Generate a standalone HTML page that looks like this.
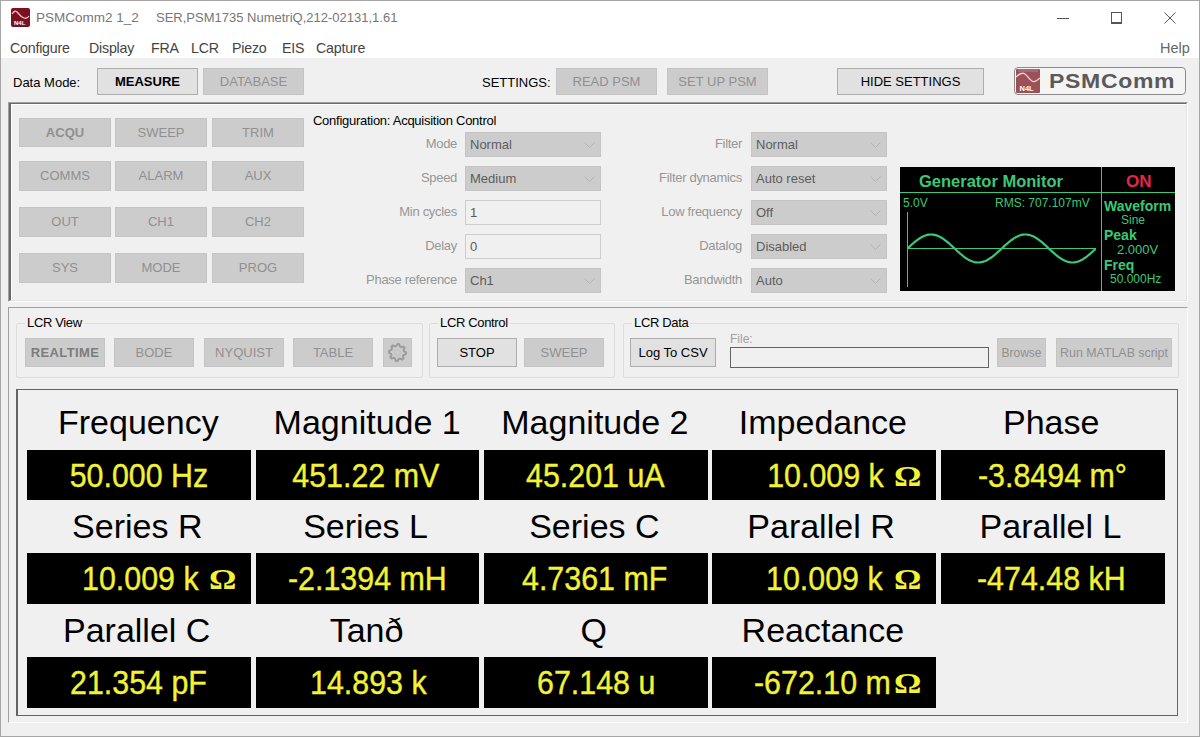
<!DOCTYPE html>
<html><head><meta charset="utf-8">
<style>
*{margin:0;padding:0;box-sizing:border-box}
html,body{width:1200px;height:737px;overflow:hidden;background:#f0f0f0;font-family:"Liberation Sans",sans-serif}
.a{position:absolute}
.t{position:absolute;white-space:nowrap}
.btn{position:absolute;background:#e1e1e1;border:1px solid #adadad;color:#000;font-size:13px;text-align:center;white-space:nowrap}
.dis{position:absolute;background:#cccccc;border:1px solid #c4c4c4;color:#909090;font-size:13px;text-align:center;white-space:nowrap}
.combo{position:absolute;background:#cccccc;border:1px solid #c4c4c4;color:#5c5c5c;font-size:13px;white-space:nowrap;padding-left:4px}
.combo svg{position:absolute;right:5px;top:9px}
.tb{position:absolute;background:#f0f0f0;border:1px solid #cdcdcd;color:#5a5a5a;font-size:13px;padding-left:4px}
.lbl{position:absolute;color:#969696;font-size:13px;text-align:right;white-space:nowrap;letter-spacing:-0.3px}
.grp{position:absolute;border:1px solid #dcdcdc;border-radius:2px}
.glt{position:absolute;background:#f0f0f0;font-size:13px;color:#000;padding:0 2px;white-space:nowrap;letter-spacing:-0.35px}
.rl{position:absolute;font-size:34px;color:#000;white-space:nowrap;line-height:40px;height:40px}
.rb{position:absolute;width:224px;height:50px;background:#000}
.rv{position:absolute;color:#f2f236;-webkit-text-stroke:0.35px #f2f236;font-size:30.4px;white-space:nowrap;line-height:34px;height:34px;transform-origin:0 50%}
</style></head><body>
<div class="a" style="left:0;top:0;width:1200px;height:737px;border:1px solid #a6a6a6;background:#f0f0f0"></div>
<div class="a" style="left:1px;top:1px;width:1198px;height:57px;background:#fff"></div>
<svg class="a" style="left:11px;top:8px" width="19" height="19" viewBox="0 0 19 19">
<rect x="0" y="0" width="19" height="19" rx="2" fill="#7a1020"/>
<path d="M1 6 Q4 1 7 5 T13 10 Q16 11 18 8" stroke="#f0c0c0" stroke-width="1.3" fill="none"/>
<text x="3" y="17" font-size="6" font-weight="bold" fill="#fff" font-family="Liberation Sans">N4L</text>
</svg>
<div class="t" style="left:36px;top:10px;font-size:13.5px;color:#777">PSMComm2 1_2</div>
<div class="t" style="left:156px;top:10px;font-size:13px;color:#777">SER,PSM1735 NumetriQ,212-02131,1.61</div>
<div class="a" style="left:1057px;top:18px;width:12px;height:1px;background:#555"></div>
<div class="a" style="left:1111px;top:12px;width:11px;height:12px;border:1px solid #555;border-bottom-width:2px"></div>
<svg class="a" style="left:1164px;top:12px" width="12" height="12"><path d="M0.5 0.5 L11.5 11.5 M11.5 0.5 L0.5 11.5" stroke="#555" stroke-width="1"/></svg>
<div class="t" style="left:10px;top:39.5px;font-size:14.2px;color:#444;letter-spacing:-0.2px">Configure</div>
<div class="t" style="left:89px;top:39.5px;font-size:14.2px;color:#444;letter-spacing:-0.2px">Display</div>
<div class="t" style="left:151px;top:39.5px;font-size:14.2px;color:#444;letter-spacing:-0.2px">FRA</div>
<div class="t" style="left:191px;top:39.5px;font-size:14.2px;color:#444;letter-spacing:-0.2px">LCR</div>
<div class="t" style="left:232px;top:39.5px;font-size:14.2px;color:#444;letter-spacing:-0.2px">Piezo</div>
<div class="t" style="left:282px;top:39.5px;font-size:14.2px;color:#444;letter-spacing:-0.2px">EIS</div>
<div class="t" style="left:316px;top:39.5px;font-size:14.2px;color:#444;letter-spacing:-0.2px">Capture</div>
<div class="t" style="left:1160px;top:39.5px;font-size:14.5px;color:#666">Help</div>
<div class="t" style="left:13px;top:75px;font-size:13px;color:#000">Data Mode:</div>
<div class="btn" style="left:97px;top:68px;width:101px;height:27px;line-height:25px;font-weight:bold">MEASURE</div>
<div class="dis" style="left:203px;top:68px;width:101px;height:27px;line-height:25px">DATABASE</div>
<div class="t" style="left:482px;top:75px;font-size:13px;color:#000">SETTINGS:</div>
<div class="dis" style="left:556px;top:68px;width:101px;height:27px;line-height:25px">READ PSM</div>
<div class="dis" style="left:667px;top:68px;width:101px;height:27px;line-height:25px">SET UP PSM</div>
<div class="btn" style="left:837px;top:68px;width:147px;height:27px;line-height:25px">HIDE SETTINGS</div>
<div class="a" style="left:1014px;top:67px;width:172px;height:28px;border:1px solid #8a8a8a;border-radius:4px;background:#f4f4f4"></div>
<svg class="a" style="left:1016px;top:69px" width="24" height="24" viewBox="0 0 24 24">
<rect x="0" y="0" width="24" height="24" rx="1" fill="#9c5058"/>
<rect x="2" y="0" width="20" height="3" fill="#a86870"/>
<path d="M0 8 C2.5 5.5 5 4 7.5 4.3 C11 4.8 14 12.6 17.6 12.6 C20 12.6 22 10.5 24 9" stroke="#f4d4d4" stroke-width="1.3" fill="none"/>
<text x="3.5" y="21.5" font-size="7.5" font-weight="bold" fill="#fff" font-family="Liberation Sans">N4L</text>
</svg>
<div class="t" style="left:1049px;top:69.5px;font-size:20px;font-weight:bold;color:#5a5a5a;letter-spacing:0.6px;transform:scaleX(1.15);transform-origin:0 0">PSMComm</div>
<div class="a" style="left:8px;top:102px;width:1180px;height:200px;border-top:1px solid #a0a0a0;border-left:1px solid #a0a0a0;border-right:1px solid #fff;border-bottom:1px solid #fff"></div>
<div class="a" style="left:9px;top:103px;width:1178px;height:198px;border-top:1px solid #696969;border-left:2px solid #696969;border-right:1px solid #e3e3e3;border-bottom:1px solid #e3e3e3;box-shadow:inset 1px 1px 0 #fff"></div>
<div class="dis" style="left:19px;top:118px;width:92px;height:29px;line-height:27px;font-weight:bold;">ACQU</div>
<div class="dis" style="left:115px;top:118px;width:92px;height:29px;line-height:27px;">SWEEP</div>
<div class="dis" style="left:212px;top:118px;width:92px;height:29px;line-height:27px;">TRIM</div>
<div class="dis" style="left:19px;top:161px;width:92px;height:30px;line-height:28px;">COMMS</div>
<div class="dis" style="left:115px;top:161px;width:92px;height:30px;line-height:28px;">ALARM</div>
<div class="dis" style="left:212px;top:161px;width:92px;height:30px;line-height:28px;">AUX</div>
<div class="dis" style="left:19px;top:207px;width:92px;height:30px;line-height:28px;">OUT</div>
<div class="dis" style="left:115px;top:207px;width:92px;height:30px;line-height:28px;">CH1</div>
<div class="dis" style="left:212px;top:207px;width:92px;height:30px;line-height:28px;">CH2</div>
<div class="dis" style="left:19px;top:253px;width:92px;height:30px;line-height:28px;">SYS</div>
<div class="dis" style="left:115px;top:253px;width:92px;height:30px;line-height:28px;">MODE</div>
<div class="dis" style="left:212px;top:253px;width:92px;height:30px;line-height:28px;">PROG</div>
<div class="t" style="left:313px;top:113px;font-size:13px;color:#000;letter-spacing:-0.27px">Configuration: Acquisition Control</div>
<div class="lbl" style="left:300px;top:136px;width:157px">Mode</div>
<div class="combo" style="left:465px;top:132px;width:136px;height:25px;line-height:23px">Normal<svg width="11" height="6"><path d="M0.5 0.5 L5.5 5.5 L10.5 0.5" stroke="#b4b4b4" fill="none"/></svg></div>
<div class="lbl" style="left:300px;top:170px;width:157px">Speed</div>
<div class="combo" style="left:465px;top:166px;width:136px;height:25px;line-height:23px">Medium<svg width="11" height="6"><path d="M0.5 0.5 L5.5 5.5 L10.5 0.5" stroke="#b4b4b4" fill="none"/></svg></div>
<div class="lbl" style="left:300px;top:204px;width:157px">Min cycles</div>
<div class="tb" style="left:465px;top:200px;width:136px;height:25px;line-height:23px">1</div>
<div class="lbl" style="left:300px;top:238px;width:157px">Delay</div>
<div class="tb" style="left:465px;top:234px;width:136px;height:25px;line-height:23px">0</div>
<div class="lbl" style="left:300px;top:272px;width:157px">Phase reference</div>
<div class="combo" style="left:465px;top:268px;width:136px;height:25px;line-height:23px">Ch1<svg width="11" height="6"><path d="M0.5 0.5 L5.5 5.5 L10.5 0.5" stroke="#b4b4b4" fill="none"/></svg></div>
<div class="lbl" style="left:600px;top:136px;width:142px">Filter</div>
<div class="combo" style="left:751px;top:132px;width:136px;height:25px;line-height:23px">Normal<svg width="11" height="6"><path d="M0.5 0.5 L5.5 5.5 L10.5 0.5" stroke="#b4b4b4" fill="none"/></svg></div>
<div class="lbl" style="left:600px;top:170px;width:142px">Filter dynamics</div>
<div class="combo" style="left:751px;top:166px;width:136px;height:25px;line-height:23px">Auto reset<svg width="11" height="6"><path d="M0.5 0.5 L5.5 5.5 L10.5 0.5" stroke="#b4b4b4" fill="none"/></svg></div>
<div class="lbl" style="left:600px;top:204px;width:142px">Low frequency</div>
<div class="combo" style="left:751px;top:200px;width:136px;height:25px;line-height:23px">Off<svg width="11" height="6"><path d="M0.5 0.5 L5.5 5.5 L10.5 0.5" stroke="#b4b4b4" fill="none"/></svg></div>
<div class="lbl" style="left:600px;top:238px;width:142px">Datalog</div>
<div class="combo" style="left:751px;top:234px;width:136px;height:25px;line-height:23px">Disabled<svg width="11" height="6"><path d="M0.5 0.5 L5.5 5.5 L10.5 0.5" stroke="#b4b4b4" fill="none"/></svg></div>
<div class="lbl" style="left:600px;top:272px;width:142px">Bandwidth</div>
<div class="combo" style="left:751px;top:268px;width:136px;height:25px;line-height:23px">Auto<svg width="11" height="6"><path d="M0.5 0.5 L5.5 5.5 L10.5 0.5" stroke="#b4b4b4" fill="none"/></svg></div>
<svg class="a" style="left:900px;top:167px" width="275" height="124" viewBox="0 0 275 124">
<rect x="0" y="0" width="275" height="124" fill="#000"/>
<line x1="201.5" y1="0" x2="201.5" y2="124" stroke="#3cc878" stroke-width="1"/>
<line x1="0" y1="25.5" x2="275" y2="25.5" stroke="#3cc878" stroke-width="1"/>
<line x1="7.5" y1="45" x2="7.5" y2="120" stroke="#3cc878" stroke-width="1"/>
<line x1="7" y1="81.5" x2="196" y2="81.5" stroke="#3cc878" stroke-width="1"/>
<polyline points="7.5,81.5 8.5,80.6 9.5,79.6 10.5,78.7 11.5,77.8 12.5,76.9 13.5,76.0 14.5,75.2 15.5,74.4 16.5,73.6 17.5,72.8 18.5,72.1 19.5,71.5 20.5,70.8 21.5,70.2 22.5,69.7 23.5,69.2 24.5,68.8 25.5,68.5 26.5,68.1 27.5,67.9 28.5,67.7 29.5,67.6 30.5,67.5 31.5,67.5 32.5,67.6 33.5,67.7 34.5,67.9 35.5,68.1 36.5,68.4 37.5,68.8 38.5,69.2 39.5,69.7 40.5,70.2 41.5,70.8 42.5,71.4 43.5,72.0 44.5,72.8 45.5,73.5 46.5,74.3 47.5,75.1 48.5,75.9 49.5,76.8 50.5,77.7 51.5,78.6 52.5,79.5 53.5,80.5 54.5,81.4 55.5,82.3 56.5,83.2 57.5,84.2 58.5,85.1 59.5,86.0 60.5,86.8 61.5,87.7 62.5,88.5 63.5,89.3 64.5,90.1 65.5,90.8 66.5,91.5 67.5,92.1 68.5,92.7 69.5,93.2 70.5,93.7 71.5,94.1 72.5,94.5 73.5,94.8 74.5,95.1 75.5,95.3 76.5,95.4 77.5,95.5 78.5,95.5 79.5,95.4 80.5,95.3 81.5,95.2 82.5,94.9 83.5,94.6 84.5,94.3 85.5,93.9 86.5,93.4 87.5,92.9 88.5,92.3 89.5,91.7 90.5,91.0 91.5,90.3 92.5,89.6 93.5,88.8 94.5,88.0 95.5,87.2 96.5,86.3 97.5,85.4 98.5,84.5 99.5,83.6 100.5,82.7 101.5,81.7 102.5,80.8 103.5,79.9 104.5,78.9 105.5,78.0 106.5,77.1 107.5,76.3 108.5,75.4 109.5,74.6 110.5,73.8 111.5,73.0 112.5,72.3 113.5,71.6 114.5,71.0 115.5,70.4 116.5,69.8 117.5,69.4 118.5,68.9 119.5,68.5 120.5,68.2 121.5,67.9 122.5,67.7 123.5,67.6 124.5,67.5 125.5,67.5 126.5,67.5 127.5,67.6 128.5,67.8 129.5,68.0 130.5,68.3 131.5,68.7 132.5,69.1 133.5,69.5 134.5,70.0 135.5,70.6 136.5,71.2 137.5,71.9 138.5,72.6 139.5,73.3 140.5,74.1 141.5,74.9 142.5,75.7 143.5,76.6 144.5,77.5 145.5,78.4 146.5,79.3 147.5,80.2 148.5,81.2 149.5,82.1 150.5,83.0 151.5,83.9 152.5,84.9 153.5,85.7 154.5,86.6 155.5,87.5 156.5,88.3 157.5,89.1 158.5,89.9 159.5,90.6 160.5,91.3 161.5,91.9 162.5,92.5 163.5,93.1 164.5,93.6 165.5,94.0 166.5,94.4 167.5,94.7 168.5,95.0 169.5,95.2 170.5,95.4 171.5,95.5 172.5,95.5 173.5,95.5 174.5,95.4 175.5,95.2 176.5,95.0 177.5,94.7 178.5,94.4 179.5,94.0 180.5,93.5 181.5,93.0 182.5,92.5 183.5,91.9 184.5,91.2 185.5,90.5 186.5,89.8 187.5,89.0 188.5,88.2 189.5,87.4 190.5,86.5 191.5,85.6 192.5,84.7 193.5,83.8 194.5,82.9 195.5,82.0" stroke="#3cc878" stroke-width="2.2" fill="none"/>
</svg>
<div class="t" style="left:919px;top:172px;font-size:16.5px;font-weight:bold;color:#3cc878">Generator Monitor</div>
<div class="t" style="left:1126px;top:172px;font-size:17px;font-weight:bold;color:#e0284a">ON</div>
<div class="t" style="left:903px;top:196px;font-size:12px;color:#3cc878">5.0V</div>
<div class="t" style="left:995px;top:196px;font-size:12px;color:#3cc878">RMS: 707.107mV</div>
<div class="t" style="left:1104px;top:197.5px;font-size:14px;font-weight:bold;color:#3cc878">Waveform</div>
<div class="t" style="left:1121px;top:213px;font-size:12px;color:#3cc878">Sine</div>
<div class="t" style="left:1104px;top:226.5px;font-size:14px;font-weight:bold;color:#3cc878">Peak</div>
<div class="t" style="left:1117px;top:242px;font-size:13px;color:#3cc878">2.000V</div>
<div class="t" style="left:1104px;top:257px;font-size:14px;font-weight:bold;color:#3cc878">Freq</div>
<div class="t" style="left:1110px;top:272px;font-size:12px;color:#3cc878">50.000Hz</div>
<div class="a" style="left:8px;top:307px;width:1180px;height:416px;border-top:1px solid #a0a0a0;border-left:1px solid #a0a0a0;border-right:1px solid #fff;border-bottom:1px solid #fff"></div>
<div class="grp" style="left:16px;top:323px;width:407px;height:55px"></div>
<div class="glt" style="left:25px;top:315px">LCR View</div>
<div class="grp" style="left:429px;top:323px;width:186px;height:55px"></div>
<div class="glt" style="left:438px;top:315px">LCR Control</div>
<div class="grp" style="left:623px;top:323px;width:556px;height:55px"></div>
<div class="glt" style="left:632px;top:315px">LCR Data</div>
<div class="dis" style="left:25px;top:338px;width:80px;height:29px;line-height:27px;font-weight:bold;color:#7c7c7c;letter-spacing:0.4px;">REALTIME</div>
<div class="dis" style="left:114px;top:338px;width:80px;height:29px;line-height:27px;">BODE</div>
<div class="dis" style="left:204px;top:338px;width:80px;height:29px;line-height:27px;">NYQUIST</div>
<div class="dis" style="left:293px;top:338px;width:80px;height:29px;line-height:27px;">TABLE</div>
<div class="dis" style="left:383px;top:338px;width:29px;height:29px"></div>
<svg class="a" style="left:383px;top:338px" width="29" height="29"><polygon points="23.0,14.5 22.8,16.2 20.5,17.0 19.9,18.1 20.5,20.5 19.2,21.6 17.0,20.5 15.8,20.9 14.5,23.0 12.8,22.8 12.0,20.5 10.9,19.9 8.5,20.5 7.4,19.2 8.5,17.0 8.1,15.8 6.0,14.5 6.2,12.8 8.5,12.0 9.1,10.9 8.5,8.5 9.8,7.4 12.0,8.5 13.2,8.1 14.5,6.0 16.2,6.2 17.0,8.5 18.1,9.1 20.5,8.5 21.6,9.8 20.5,12.0 20.9,13.2" fill="none" stroke="#9c9c9c" stroke-width="2"/><circle cx="14.5" cy="14.5" r="3" fill="none" stroke="#bdbdbd" stroke-width="1"/></svg>
<div class="btn" style="left:437px;top:338px;width:80px;height:29px;line-height:27px">STOP</div>
<div class="dis" style="left:524px;top:338px;width:80px;height:29px;line-height:27px">SWEEP</div>
<div class="btn" style="left:630px;top:338px;width:86px;height:29px;line-height:27px">Log To CSV</div>
<div class="t" style="left:730px;top:332px;font-size:12px;color:#a0a0a0">File:</div>
<div class="a" style="left:730px;top:347px;width:259px;height:21px;border:1px solid #646464;background:#f0f0f0"></div>
<div class="dis" style="left:997px;top:338px;width:49px;height:29px;line-height:29px;font-size:12px">Browse</div>
<div class="dis" style="left:1056px;top:338px;width:116px;height:29px;line-height:29px;font-size:12.4px">Run MATLAB script</div>
<div class="a" style="left:16px;top:389px;width:1162px;height:327px;border:1px solid #646464;border-left-width:2px"></div>
<div class="rl" style="left:58.0px;top:402.0px">Frequency</div>
<div class="rl" style="left:273.6px;top:402.0px">Magnitude 1</div>
<div class="rl" style="left:501.3px;top:402.0px">Magnitude 2</div>
<div class="rl" style="left:738.8px;top:402.0px">Impedance</div>
<div class="rl" style="left:1003.0px;top:402.0px">Phase</div>
<div class="rl" style="left:72.1px;top:505.5px">Series R</div>
<div class="rl" style="left:303.2px;top:505.5px">Series L</div>
<div class="rl" style="left:529.2px;top:505.5px">Series C</div>
<div class="rl" style="left:747.3px;top:505.5px">Parallel R</div>
<div class="rl" style="left:979.6px;top:505.5px">Parallel L</div>
<div class="rl" style="left:63.0px;top:610.0px">Parallel C</div>
<div class="rl" style="left:329.7px;top:610.0px">Tan&eth;</div>
<div class="rl" style="left:580.5px;top:610.0px">Q</div>
<div class="rl" style="left:741.6px;top:610.0px">Reactance</div>
<div class="rb" style="left:27px;top:450px;width:224px;height:50px"></div>
<div class="rb" style="left:256px;top:450px;width:223px;height:50px"></div>
<div class="rb" style="left:484px;top:450px;width:224px;height:50px"></div>
<div class="rb" style="left:712px;top:450px;width:224px;height:50px"></div>
<div class="rb" style="left:941px;top:450px;width:224px;height:50px"></div>
<div class="rb" style="left:27px;top:553px;width:224px;height:51px"></div>
<div class="rb" style="left:256px;top:553px;width:223px;height:51px"></div>
<div class="rb" style="left:484px;top:553px;width:224px;height:51px"></div>
<div class="rb" style="left:712px;top:553px;width:224px;height:51px"></div>
<div class="rb" style="left:941px;top:553px;width:224px;height:51px"></div>
<div class="rb" style="left:27px;top:657px;width:224px;height:51px"></div>
<div class="rb" style="left:256px;top:657px;width:223px;height:51px"></div>
<div class="rb" style="left:484px;top:657px;width:224px;height:51px"></div>
<div class="rb" style="left:712px;top:657px;width:224px;height:51px"></div>
<div class="rv" style="left:69.7px;top:458.0px;transform:scaleY(1.08)">50.000 Hz</div>
<div class="rv" style="left:292.3px;top:458.0px;transform:scaleY(1.08)">451.22 mV</div>
<div class="rv" style="left:526.0px;top:458.0px;transform:scaleY(1.08)">45.201 uA</div>
<div class="rv" style="left:767.2px;top:458.0px;transform:scaleY(1.08)">10.009 k</div>
<div class="rv" style="left:894.0px;top:459.0px;font-weight:bold;font-family:'Liberation Serif',serif;font-size:29px;-webkit-text-stroke:0;transform:scaleX(1.18)">&Omega;</div>
<div class="rv" style="left:978.0px;top:458.0px;transform:scaleY(1.08)">-3.8494 m&deg;</div>
<div class="rv" style="left:82.0px;top:561.0px;transform:scaleY(1.08)">10.009 k</div>
<div class="rv" style="left:209.0px;top:562.0px;font-weight:bold;font-family:'Liberation Serif',serif;font-size:29px;-webkit-text-stroke:0;transform:scaleX(1.18)">&Omega;</div>
<div class="rv" style="left:288.0px;top:561.0px;transform:scaleY(1.08)">-2.1394 mH</div>
<div class="rv" style="left:522.0px;top:561.0px;transform:scaleY(1.08)">4.7361 mF</div>
<div class="rv" style="left:766.0px;top:561.0px;transform:scaleY(1.08)">10.009 k</div>
<div class="rv" style="left:894.0px;top:562.0px;font-weight:bold;font-family:'Liberation Serif',serif;font-size:29px;-webkit-text-stroke:0;transform:scaleX(1.18)">&Omega;</div>
<div class="rv" style="left:977.0px;top:561.0px;transform:scaleY(1.08)">-474.48 kH</div>
<div class="rv" style="left:70.0px;top:665.0px;transform:scaleY(1.08)">21.354 pF</div>
<div class="rv" style="left:310.0px;top:665.0px;transform:scaleY(1.08)">14.893 k</div>
<div class="rv" style="left:537.0px;top:665.0px;transform:scaleY(1.08)">67.148 u</div>
<div class="rv" style="left:754.0px;top:665.0px;transform:scaleY(1.08)">-672.10 m</div>
<div class="rv" style="left:894.0px;top:666.0px;font-weight:bold;font-family:'Liberation Serif',serif;font-size:29px;-webkit-text-stroke:0;transform:scaleX(1.18)">&Omega;</div>
</body></html>
